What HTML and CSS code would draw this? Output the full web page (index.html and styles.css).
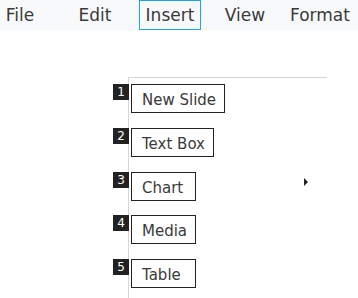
FILE: index.html
```html
<!DOCTYPE html>
<html lang="en">

<head>
  <meta charset="UTF-8" />
  <meta name="viewport" content="width=device-width, initial-scale=1" />
  <title>Insert menu</title>
  <link rel="stylesheet" href="styles.css">
</head>

<body>
  <nav class="menubar">
    <div class="menubar-inner">
      <span class="menu-item">File</span>
      <span class="menu-item">Edit</span>
      <span class="menu-item active">Insert</span>
      <span class="menu-item">View</span>
      <span class="menu-item">Format</span>
    </div>
  </nav>

  <!-- dropdown for the Insert menu -->
  <div class="dropdown">
    <div class="dropdown-row">
      <span class="shortcut">1</span>
      <span class="option">New Slide</span>
    </div>
    <div class="dropdown-row">
      <span class="shortcut">2</span>
      <span class="option">Text Box</span>
    </div>
    <div class="dropdown-row">
      <span class="shortcut">3</span>
      <span class="option">Chart</span>
      <span class="submenu-arrow"></span>
    </div>
    <div class="dropdown-row">
      <span class="shortcut">4</span>
      <span class="option">Media</span>
    </div>
    <div class="dropdown-row">
      <span class="shortcut">5</span>
      <span class="option">Table</span>
    </div>
  </div>
</body>

</html>
```

FILE: styles.css
```css
* {
  margin: 0;
  padding: 0;
  box-sizing: border-box;
}

body {
  background: #ffffff;
  color: #333333;
  font-family: "DejaVu Sans", sans-serif;
  overflow: hidden;
}

.menubar {
  height: 30px;
  background: #f8f9fa;
  overflow: hidden;
}

.menubar-inner {
  display: grid;
  grid-template-columns: repeat(5, 75px);
  justify-items: center;
  margin-left: -17.5px;
}

.menu-item {
  font-size: 17px;
  line-height: 28px;
  padding: 0 6px;
  border: 1px solid transparent;
  color: #3a3a3a;
}

.menu-item.active {
  border-color: #1aa7ec;
}

.dropdown {
  margin: 47px 0 0 128px;
  width: 199px;
  height: 221px;
  border-top: 1px solid #d4d6da;
  border-left: 1px solid #d4d6da;
  padding-top: 6px;
  display: flex;
  flex-direction: column;
  gap: 14.75px;
}

.dropdown-row {
  position: relative;
  padding-left: 2px;
}

.shortcut {
  position: absolute;
  left: -16px;
  top: 0;
  width: 16px;
  height: 16px;
  background: #222222;
  color: #ffffff;
  font-size: 12px;
  line-height: 16px;
  text-align: center;
}

.option {
  display: inline-block;
  min-width: 65px;
  border: 1px solid #222222;
  padding: 4px 8px 0 10px;
  font-size: 15px;
  line-height: 23px;
  color: #3a3a3a;
}

.submenu-arrow {
  position: absolute;
  right: 19px;
  top: 6px;
  width: 0;
  height: 0;
  border-left: 4px solid #222222;
  border-top: 4px solid transparent;
  border-bottom: 4px solid transparent;
}
```
